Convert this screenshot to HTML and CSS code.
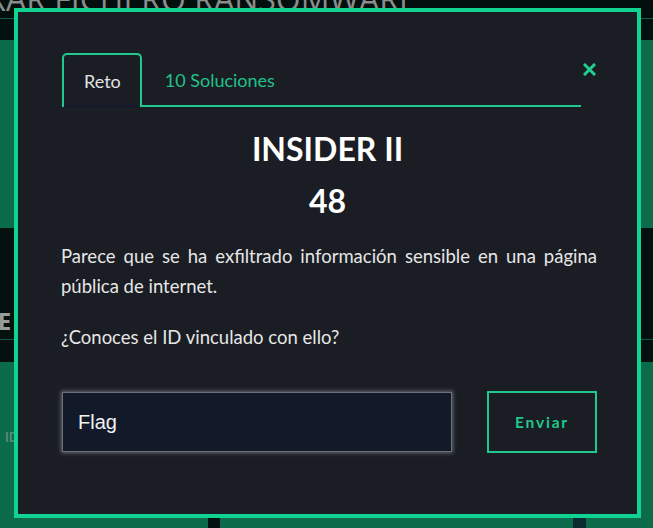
FILE: index.html
```html
<!DOCTYPE html>
<html lang="es">
<head>
<meta charset="utf-8">
<title>INSIDER II</title>
<link rel="stylesheet" href="styles.css">
</head>
<body>
<div class="page">
  <header class="topbar"><h1 class="page-title">DESCIFRAR FICHERO RANSOMWARE</h1></header>
  <div class="subbar"></div>
  <section class="green-zone"></section>
  <section class="dark-band">
    <div class="band-head"><span class="band-title">CHALLENGE</span></div>
  </section>
  <section class="green-zone lower">
    <span class="faint-id">ID</span>
  </section>
  <div class="bottom-row">
    <span class="blk blk-a"></span>
    <span class="blk blk-b"></span>
  </div>
</div>

<div class="modal">
  <div class="modal-head">
    <ul class="tabs">
      <li class="tab active">Reto</li>
      <li class="tab">10 Soluciones</li>
    </ul>
    <button class="close" aria-label="Cerrar">
      <svg width="13" height="13" viewBox="0 0 13 13"><path d="M2 2 L11 11 M11 2 L2 11" stroke="#1fd08f" stroke-width="3" stroke-linecap="square"/></svg>
    </button>
  </div>
  <h2 class="ch-title">INSIDER II</h2>
  <div class="ch-points">48</div>
  <p class="desc justify">Parece que se ha exfiltrado información sensible en una página pública de internet.</p>
  <p class="desc">¿Conoces el ID vinculado con ello?</p>
  <form class="flag-form">
    <input class="flag-input" type="text" placeholder="Flag">
    <button class="send" type="button">Enviar</button>
  </form>
</div>
</body>
</html>
```
FILE: styles.css
```css
html, body {
  margin: 0;
  padding: 0;
  height: 100%;
  overflow: hidden;
}
body {
  background: #0b6b4b;
  font-family: Lato, "Open Sans", sans-serif;
}
.page {
  display: flex;
  flex-direction: column;
  height: 528px;
}
.topbar {
  height: 18px;
  background: #030f0d;
  border-bottom: 1px solid #0e5c41;
  overflow: hidden;
}
.page-title {
  margin: -23px 0 0 -118px;
  font-family: "Open Sans", sans-serif;
  font-weight: 400;
  font-size: 32px;
  line-height: 44px;
  color: #8a8d8c;
  white-space: nowrap;
}
.subbar {
  height: 21px;
  background: #04120f;
}
.green-zone {
  height: 188px;
  background: #0b6b4b;
}
.dark-band {
  height: 134px;
  background: #04110e;
  display: flex;
  flex-direction: column;
}
.band-head {
  height: 111px;
  border-bottom: 1px solid #0d5a40;
  display: flex;
  align-items: flex-end;
  overflow: hidden;
}
.band-title {
  font-family: "Open Sans", sans-serif;
  font-weight: 700;
  font-size: 24px;
  line-height: 24px;
  color: #9a9d9c;
  margin-left: -130px;
  margin-bottom: 6px;
}
.green-zone.lower {
  flex: 1;
  padding: 64px 0 0 5px;
}
.faint-id {
  font-size: 13px;
  color: #5a8a78;
  font-weight: 700;
}
.bottom-row {
  height: 10px;
  position: relative;
  background: #0b6b4b;
}
.blk {
  position: absolute;
  top: 0;
  height: 10px;
}
.blk-a { left: 208px; width: 12px; background: #02120f; }
.blk-b { left: 573px; width: 13px; background: #0a2b30; }

.modal {
  position: absolute;
  left: 14px;
  top: 8px;
  width: 619px;
  height: 502px;
  box-sizing: content-box;
  border: 4px solid #10d392;
  background: #1a1d23;
}
.modal-head {
  display: flex;
  align-items: flex-start;
  margin: 41px 0 0 44px;
  width: 538px;
}
.tabs {
  list-style: none;
  margin: 0;
  padding: 0;
  display: flex;
  width: 519px;
  border-bottom: 2px solid #1fc88c;
}
.tab {
  font-size: 18px;
  height: 52px;
  line-height: 55px;
  padding: 0 22px 0 23px;
  color: #1fc28a;
  box-sizing: border-box;
}
.tab.active {
  color: #e4e4e4;
  border: 2px solid #1fc88c;
  border-bottom: none;
  border-radius: 5px 5px 0 0;
  margin-bottom: -2px;
  height: 54px;
  padding: 0 19px 0 20px;
  line-height: 53px;
  box-shadow: inset 0 -2px 0 #131a2e;
}
.close {
  background: none;
  border: none;
  padding: 0;
  margin: 10px 0 0 2px;
  width: 13px;
  height: 13px;
  cursor: pointer;
  display: flex;
}
.ch-title {
  margin: 22px 0 0;
  text-align: center;
  font-size: 32px;
  line-height: 40px;
  font-weight: 700;
  color: #ffffff;
}
.ch-points {
  text-align: center;
  font-size: 32px;
  line-height: 40px;
  font-weight: 700;
  color: #ffffff;
  margin-top: 12px;
}
.desc {
  margin: 21px 40px 0 43px;
  font-size: 18.5px;
  line-height: 30px;
  color: #e6e6e6;
}
.justify {
  text-align: justify;
  margin-top: 20px;
}
.flag-form {
  display: flex;
  align-items: center;
  margin: 39px 40px 0 44px;
  gap: 35px;
}
.flag-input {
  width: 390px;
  height: 60px;
  box-sizing: border-box;
  background: #121a2a;
  border: 1px solid #6c7079;
  box-shadow: 0 0 4px 1px rgba(200, 200, 210, 0.45);
  color: #fff;
  font-family: "Liberation Sans", Arial, sans-serif;
  font-size: 20px;
  padding: 0 15px;
  outline: none;
}
.flag-input::placeholder {
  color: #f2f2f2;
}
.send {
  width: 110px;
  height: 62px;
  background: transparent;
  border: 2px solid #1fc88c;
  color: #1fc88c;
  font-family: Lato, sans-serif;
  font-weight: 700;
  font-size: 15.5px;
  letter-spacing: 1.8px;
  cursor: pointer;
}
```
